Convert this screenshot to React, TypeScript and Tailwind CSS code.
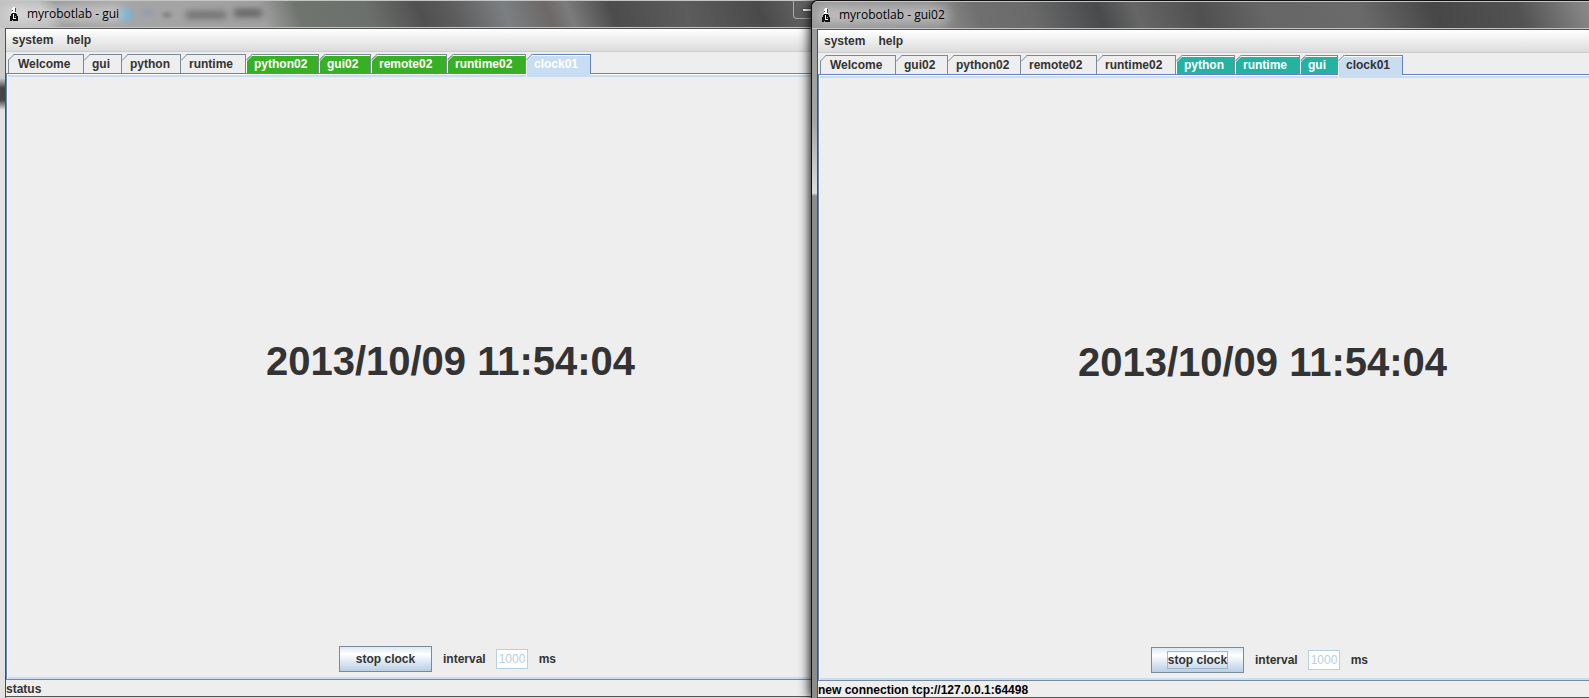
import { useState } from 'react'
import clsx from 'clsx'

interface Tab {
  name: string
  width: string
  tone?: 'green' | 'teal'
}

interface FrameProps {
  title: string
  tabs: Tab[]
  status: string
  className: string
  titleClass: string
  statusClass: string
  selectedText: string
  buttonFocused?: boolean
  showControls?: boolean
}

const leftTabs: Tab[] = [
  { name: 'Welcome', width: 'w-[76px]' },
  { name: 'gui', width: 'w-[38px]' },
  { name: 'python', width: 'w-[59px]' },
  { name: 'runtime', width: 'w-[65px]' },
  { name: 'python02', width: 'w-[73px]', tone: 'green' },
  { name: 'gui02', width: 'w-[52px]', tone: 'green' },
  { name: 'remote02', width: 'w-[76px]', tone: 'green' },
  { name: 'runtime02', width: 'w-[79px]', tone: 'green' },
  { name: 'clock01', width: 'w-[65px]' },
]

const rightTabs: Tab[] = [
  { name: 'Welcome', width: 'w-[76px]' },
  { name: 'gui02', width: 'w-[52px]' },
  { name: 'python02', width: 'w-[73px]' },
  { name: 'remote02', width: 'w-[76px]' },
  { name: 'runtime02', width: 'w-[79px]' },
  { name: 'python', width: 'w-[59px]', tone: 'teal' },
  { name: 'runtime', width: 'w-[65px]', tone: 'teal' },
  { name: 'gui', width: 'w-[38px]', tone: 'teal' },
  { name: 'clock01', width: 'w-[65px]' },
]

function RobotIcon() {
  return (
    <svg width="10" height="16" viewBox="0 0 10 16" shapeRendering="crispEdges" aria-hidden="true">
      <path d="M3 6h4v2h1v2h1v5H1v-5h1V8h1z" fill="#111" />
      <path d="M4 1h2v1h1v5H3V2h1z" fill="#fff" />
      <path d="M6 2h1v4H6zM3 4h1v1H3z" fill="#444" />
      <path d="M4 8h1v4h2v1H4z" fill="#fff" />
      <path d="M3 14h1v1H3zM6 10h1v1H6z" fill="#aaa" />
    </svg>
  )
}

function TabCorner({ stroke, highlight, first }: { stroke: string; highlight: boolean; first: boolean }) {
  return (
    <svg
      className={clsx('absolute -top-px', first ? '-left-px' : 'left-0')}
      width="7"
      height="7"
      viewBox="0 0 7 7"
      aria-hidden="true"
    >
      <path d="M0 0h6L0 6z" fill="#eee" />
      {highlight && <path d="M0 7.5L7.5 0" stroke="#fff" />}
      <path d="M0 6.5L6.5 0" stroke={stroke} />
    </svg>
  )
}

// what shows through the glass title bar from the window behind
function GlassReflection() {
  return (
    <div className="absolute inset-0 overflow-hidden" aria-hidden="true">
      <span className="absolute top-2 left-[120px] h-3 w-3 rounded-full bg-[#6fb4dd] blur-[3px]" />
      <span className="absolute top-2 left-[142px] h-2 w-3 bg-[#8796b8] opacity-60 blur-[3px]" />
      <span className="absolute top-3 left-[163px] h-1 w-2 bg-[#555] opacity-60 blur-[2px]" />
      <span className="absolute top-2.5 left-[186px] h-2 w-10 bg-[#666] opacity-80 blur-[3px]" />
      <span className="absolute top-2 left-[234px] h-2 w-7 bg-[#555] opacity-80 blur-[3px]" />
    </div>
  )
}

function Frame(props: FrameProps) {
  const { title, tabs, status, className, titleClass, statusClass, selectedText } = props
  const [selected, setSelected] = useState('clock01')
  const [running, setRunning] = useState(true)

  return (
    <section className={clsx('absolute flex h-screen w-[893px] flex-col overflow-hidden', className)}>
      <header className={clsx('relative flex h-7 shrink-0 items-center border-y border-[#c4c4c4] pl-[9px]', titleClass)}>
        {props.showControls && <GlassReflection />}
        <div className="relative flex items-center gap-2">
          <span className="absolute -inset-x-1 inset-y-0 rounded-full bg-white/40 blur-[6px]" />
          <span className="relative">
            <RobotIcon />
          </span>
          <h1 className="relative font-['Open_Sans',sans-serif] text-xs font-normal text-black">{title}</h1>
        </div>
        {props.showControls && (
          <button
            aria-label="Minimize"
            className="absolute top-0 left-[793px] flex h-[18px] w-7 items-center rounded-bl border border-t-0 border-[#aaa] pl-2"
          >
            <span className="h-1 w-3 border border-[#555] bg-white" />
          </button>
        )}
      </header>

      <div className="ml-[5px] flex flex-1 flex-col border-t border-l border-[#4f4f4f] bg-[#eee]">
        <nav className="flex h-[23px] shrink-0 items-center gap-[13px] border-b border-[#ccc] bg-linear-to-b from-white to-[#dcdcdc] pl-1.5">
          <button>system</button>
          <button>help</button>
        </nav>

        <div role="tablist" className="relative z-10 flex h-[21px] shrink-0 items-end pt-0.5 pl-0.5">
          {tabs.map((tab, i) => {
            const active = tab.name === selected
            return (
              <button
                key={tab.name}
                role="tab"
                aria-selected={active}
                onClick={() => setSelected(tab.name)}
                className={clsx(
                  'relative flex h-[19px] border-t border-r pt-px leading-4',
                  tab.width,
                  i === 0 ? 'border-l pl-[9px]' : 'pl-2',
                  active
                    ? 'border-[#6382bf] bg-[#c8ddf2] shadow-[inset_1px_1px_#fff] after:absolute after:inset-x-0 after:top-full after:h-1 after:border-l after:border-white after:bg-[#c8ddf2]'
                    : 'border-[#7a8a99]',
                  active && selectedText,
                  !active && tab.tone && 'text-white shadow-[inset_1px_1px_#fff]',
                  !active && tab.tone === 'green' && 'bg-[#38b025]',
                  !active && tab.tone === 'teal' && 'bg-[#24b2a2]'
                )}
              >
                <TabCorner
                  stroke={active ? '#6382bf' : '#7a8a99'}
                  highlight={active || !!tab.tone}
                  first={i === 0}
                />
                {tab.name}
              </button>
            )
          })}
        </div>

        <main className="flex flex-1 flex-col border-t border-b border-l border-t-[#6382bf] border-b-[#7a8a99] border-l-[#6382bf]">
          <div className="flex flex-1 flex-col border-t border-l border-white">
            <div className="flex flex-1 flex-col border-y-2 border-[#c8ddf2]">
              <div className="flex flex-1 items-center justify-center pb-0.5 text-[40px] leading-10">
                <time>2013/10/09 11:54:04</time>
              </div>
              <div className="flex h-[31px] shrink-0 items-start justify-center pr-1.5">
                <button
                  onClick={() => setRunning(!running)}
                  className="flex h-[26px] w-[93px] items-center justify-center border border-[#7a8a99] bg-linear-to-b from-[#dde8f3] via-white via-30% to-[#b8cfe5]"
                >
                  <span className={clsx('border leading-4', props.buttonFocused ? 'border-[#a3b8cc]' : 'border-transparent')}>
                    {running ? 'stop clock' : 'start clock'}
                  </span>
                </button>
                <label className="ml-[11px] flex items-center gap-2.5 leading-[26px]">
                  interval
                  <input
                    disabled
                    defaultValue="1000"
                    className="h-5 w-8 border border-[#b8cfe5] bg-white pl-0.5 font-normal text-[#b8cfe5]"
                  />
                </label>
                <span className="ml-[11px] leading-[26px]">ms</span>
              </div>
            </div>
          </div>
        </main>

        <footer className={clsx('h-4 shrink-0 leading-[19px]', statusClass)}>{status}</footer>
        <div className="h-0.5 shrink-0 border-t border-[#555] bg-[#ddd]" />
      </div>
    </section>
  )
}

export default function App() {
  return (
    <div className="relative h-screen overflow-hidden bg-[#ddd] font-['Liberation_Sans',Arial,sans-serif] text-xs font-bold text-[#333]">
      <Frame
        title="myrobotlab - gui"
        tabs={leftTabs}
        status="status"
        className="top-0 left-0 bg-[linear-gradient(#ccc_0_78px,#444_88px_100px,#e2e2e2_110px)]"
        titleClass="bg-[linear-gradient(70deg,#c4c4c4_0,#b8b8b8_45px,#969696_60px,#a6a6a6_120px,#a0a0a0_250px,#70746f_285px,#6c706c_350px,#505050_400px,#5c5c5c_430px,#7c7f82_480px,#6c6866_520px,#7c7c7c_540px,#4c4c4c_580px,#5c5c5c_650px,#4a4a4a_720px,#686868_770px)]"
        statusClass="text-[#333]"
        selectedText="text-white"
        showControls
      />
      <Frame
        title="myrobotlab - gui02"
        tabs={rightTabs}
        status="new connection tcp://127.0.0.1:64498"
        className="top-px left-[811px] ml-px rounded-tl-md bg-[linear-gradient(#999_0,#a4a4a4_120px,#ddd_192px,#8c8c8c_195px)] shadow-[-1px_-1px_0_#111,-2px_0_12px_#000]"
        titleClass="bg-[linear-gradient(70deg,#999_0,#8c8c8c_120px,#707070_160px,#6a6a6a_210px,#484a4c_275px,#666_310px,#505050_370px,#666_430px,#6a6a6a_520px,#474747_590px,#525252_670px,#8c8c8c_740px)]"
        statusClass="text-black"
        selectedText="text-[#333]"
        buttonFocused
      />
    </div>
  )
}
